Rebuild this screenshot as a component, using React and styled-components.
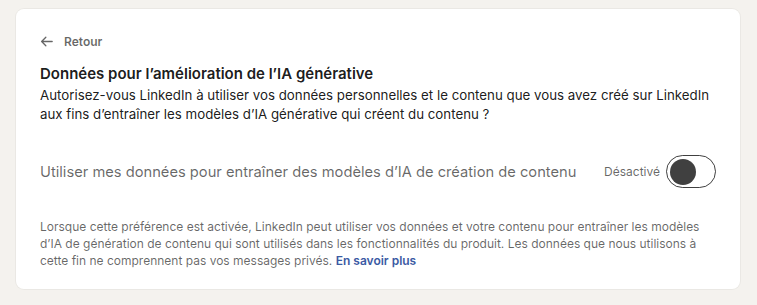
import React from "react";
import styled, { createGlobalStyle } from "styled-components";

const Global = createGlobalStyle`
  html, body { margin: 0; padding: 0; background: #f4f2ee; }
  body { font-family: Inter, "Noto Sans", sans-serif; -webkit-font-smoothing: antialiased; }
`;

const Page = styled.div`
  padding: 9px 17px 16px 16px;
`;

const Card = styled.section`
  background: #fff;
  border-radius: 8px;
  padding: 24px 24px 20px 24px;
  box-shadow: 0 0 0 1px rgba(0,0,0,0.04);
`;

const Back = styled.button`
  display: flex;
  align-items: center;
  gap: 11px;
  background: none;
  border: 0;
  padding: 0;
  font: inherit;
  font-size: 12px;
  font-weight: 600;
  color: rgba(0,0,0,0.6);
  height: 16px;
  cursor: pointer;
`;

const Title = styled.h2`
  margin: 15px 0 0;
  font-size: 15px;
  line-height: 20px;
  font-weight: 600;
  color: rgba(0,0,0,0.9);
`;

const Desc = styled.p`
  margin: 2px 0 0;
  font-size: 13.3px;
  line-height: 19px;
  color: rgba(0,0,0,0.9);
`;

const ToggleRow = styled.div`
  display: flex;
  align-items: center;
  justify-content: space-between;
  margin-top: 31px;
  height: 33px;
`;

const ToggleLabel = styled.span`
  font-size: 14.7px;
  line-height: 20px;
  color: rgba(0,0,0,0.6);
  white-space: nowrap;
`;

const ToggleGroup = styled.label`
  display: flex;
  align-items: center;
  gap: 6px;
`;

const State = styled.span`
  font-size: 12px;
  color: rgba(0,0,0,0.6);
`;

const Switch = styled.span`
  box-sizing: border-box;
  width: 50px;
  height: 33px;
  border: 1.5px solid rgba(0,0,0,0.75);
  border-radius: 17px;
  display: flex;
  align-items: center;
  padding-left: 2.5px;
`;

const Knob = styled.span`
  width: 26px;
  height: 26px;
  border-radius: 50%;
  background: #404040;
`;

const Note = styled.p`
  margin: 30px 0 0;
  font-size: 12px;
  line-height: 17px;
  color: rgba(0,0,0,0.6);
`;

const Link = styled.a`
  color: #3b5aa3;
  font-weight: 600;
  text-decoration: none;
`;

export default function App() {
  return (
    <>
      <Global />
      <Page>
        <Card>
          <Back>
            <svg width="13" height="13" viewBox="0 0 16 16" fill="none">
              <path d="M15 8H2M7.2 2.8L2 8l5.2 5.2" stroke="rgba(0,0,0,0.6)" strokeWidth="1.6" strokeLinecap="round" strokeLinejoin="round" />
            </svg>
            Retour
          </Back>
          <Title>Données pour l’amélioration de l’IA générative</Title>
          <Desc>
            Autorisez-vous LinkedIn à utiliser vos données personnelles et le contenu que vous avez créé sur LinkedIn aux fins d’entraîner les modèles d’IA générative qui créent du contenu ?
          </Desc>
          <ToggleRow>
            <ToggleLabel>Utiliser mes données pour entraîner des modèles d’IA de création de contenu</ToggleLabel>
            <ToggleGroup>
              <State>Désactivé</State>
              <Switch role="switch" aria-checked="false"><Knob /></Switch>
            </ToggleGroup>
          </ToggleRow>
          <Note>
            Lorsque cette préférence est activée, LinkedIn peut utiliser vos données et votre contenu pour entraîner les modèles d’IA de génération de contenu qui sont utilisés dans les fonctionnalités du produit. Les données que nous utilisons à cette fin ne comprennent pas vos messages privés. <Link href="#">En savoir plus</Link>
          </Note>
        </Card>
      </Page>
    </>
  );
}
